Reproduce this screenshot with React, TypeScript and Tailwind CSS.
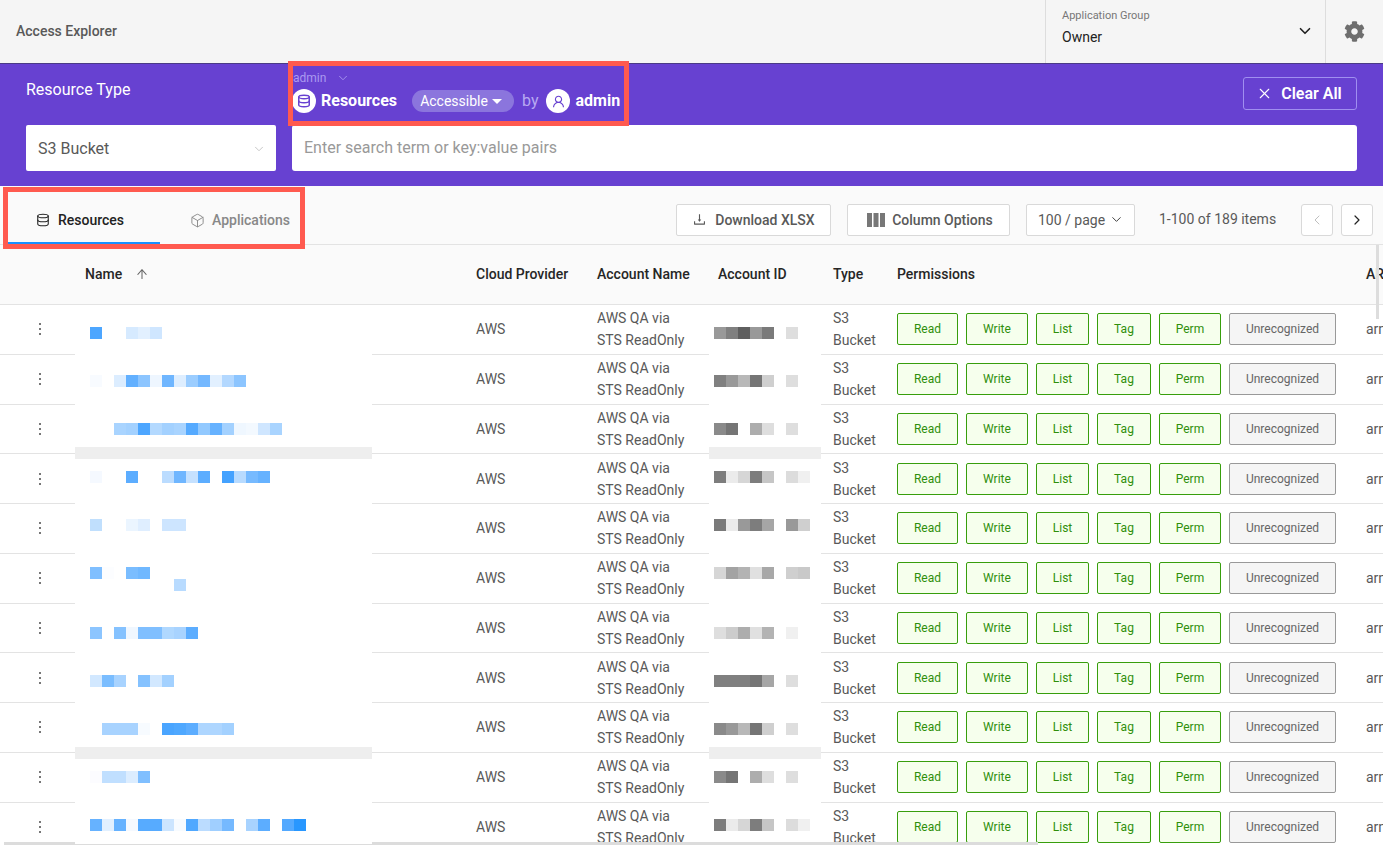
import { Box, ChevronDown, ChevronLeft, ChevronRight, Database, X } from 'lucide-react';
import { AiOutlineArrowUp, AiOutlineDownload, AiOutlineUser } from 'react-icons/ai';
import { FaCog } from 'react-icons/fa';

const nameLines: Record<number, string[]> = {
  2: ['#4da6ff', '', '', '#d6eaff', '#e2f0ff', '#cfe6ff'],
  6: ['#f8fbff', '', '#dcedff', '#62b0ff', '#8cc5ff', '#eef6ff', '#6fb6ff', '#deeeff', '#9bcdff', '#74b8ff', '#e2f0ff', '#b3d8ff', '#8cc5ff'],
  10: ['', '', '#a9d4ff', '#a3d1ff', '#4da6ff', '#b3d9ff', '#a3d1ff', '#a9d4ff', '#55aaff', '#92c9ff', '#66b2ff', '#a3d1ff', '#eff7ff', '#f3f9ff', '#cfe6ff', '#a9d4ff'],
  14: ['#f5f9ff', '', '', '#5cadff', '', '', '#bbdcff', '#6fb6ff', '#c5e1ff', '#5cadff', '', '#44a2ff', '#b8dbff', '#76baff', '#66b2ff'],
  18: ['#c0dffd', '', '', '#ebf5ff', '#dfeeff', '', '#cde5ff', '#cde5ff'],
  22: ['#80bfff', '#fcfdff', '', '#7abdff', '#70b8ff'],
  23: ['', '', '', '', '', '', '', '#b8dbff'],
  27: ['#8cc5ff', '', '#85c2ff', '#f0f7ff', '#80bfff', '#80bfff', '#b0d8ff', '#a8d3ff', '#5cadff'],
  31: ['#d2e8ff', '#7abdff', '#a8d3ff', '', '#85c2ff', '#d2e8ff', '#a3d1ff'],
  35: ['', '#a8d3ff', '#a8d3ff', '#a8d3ff', '#f7fbff', '', '#4aa5ff', '#4fa8ff', '#5cadff', '#aed6ff', '#aed6ff', '#a3d1ff'],
  39: ['#fcfcff', '#c0dfff', '#c0dfff', '#dcedff', '#80bfff'],
  43: ['#66b2ff', '#e2f0ff', '#66b2ff', '#f5f9ff', '#57abff', '#57abff', '#cce5ff', '#f7fbff', '#50a8ff', '#bbdcff', '#a0cfff', '#75b9ff', '', '#a8d3ff', '#5cadff', '', '#53a9ff', '#2897ff'],
};

const idLines: Record<number, string[]> = {
  2: ['#999999', '#808080', '#5f5f5f', '#999999', '#7a7a7a', '', '#dedede'],
  6: ['#808080', '#999999', '#b8b8b8', '#757575', '#cfcfcf', '', '#dedede'],
  10: ['#8a8a8a', '#757575', '', '#adadad', '#dedede', '', '#dedede'],
  14: ['#7d7d7d', '#ebebeb', '#d6d6d6', '#7d7d7d', '#c6c6c6', '', '#dcdcdc', '#f0f0f0'],
  18: ['#7a7a7a', '#ebebeb', '#999999', '#7d7d7d', '#a6a6a6', '', '#999999', '#cfcfcf'],
  22: ['#d6d6d6', '#a3a3a3', '#b3b3b3', '#e0e0e0', '#a8a8a8', '', '#cfcfcf', '#c9c9c9'],
  27: ['#dedede', '#cccccc', '#adadad', '#e0e0e0', '#b3b3b3', '', '#f0f0f0'],
  31: ['#808080', '#808080', '#808080', '#757575', '#a6a6a6', '', '#dedede'],
  35: ['#8a8a8a', '#999999', '#b8b8b8', '#757575', '#cfcfcf', '', '#dedede'],
  39: ['#8a8a8a', '#757575', '', '#adadad', '#dedede', '', '#dedede'],
  43: ['#7d7d7d', '#ebebeb', '#d6d6d6', '#7d7d7d', '#c6c6c6', '', '#dcdcdc', '#f0f0f0'],
};

const lineIndexes = Array.from({ length: 45 }, (_, i) => i);
const permissions = ['Read', 'Write', 'List', 'Tag', 'Perm'];
const permissionWidths = ['w-[61px]', 'w-[62px]', 'w-[53px]', 'w-[54px]', 'w-[62px]'];
const rows = Array.from({ length: 11 }, (_, i) => i);
const rowGrid = 'grid grid-cols-[75px_391px_121px_121px_115px_64px_469px_200px]';

// redacted cells in the screenshot: a white panel with a 12px mosaic
const Mosaic = ({ lines, className }: { lines: Record<number, string[]>; className: string }) => (
  <div className={`absolute top-[60px] h-[539px] overflow-hidden bg-white ${className}`}>
    <div className="-mt-[2px] flex flex-col">
      {lineIndexes.map((i) => (
        <div key={i} className={`flex h-3 shrink-0 ${i === 12 || i === 37 ? '-mx-5 bg-[#eeeeee]' : ''}`}>
          {(lines[i] || []).map((c, j) => (
            <div key={j} className="h-3 w-3 shrink-0" style={{ backgroundColor: c || 'transparent' }} />
          ))}
        </div>
      ))}
    </div>
  </div>
);

const Row = () => (
  <div className={`${rowGrid} h-[49.75px] items-center border-b border-[#e3e3e3] text-sm leading-[22px] text-[#595959]`}>
    <div className="flex flex-col items-center gap-[3px] pl-[5px]">
      <span className="h-[2px] w-[2px] bg-[#777777]" />
      <span className="h-[2px] w-[2px] bg-[#777777]" />
      <span className="h-[2px] w-[2px] bg-[#777777]" />
    </div>
    <div />
    <div className="pl-[10px]">AWS</div>
    <div className="pl-[10px]">
      AWS QA via
      <br />
      STS ReadOnly
    </div>
    <div />
    <div className="pl-[10px]">
      S3
      <br />
      Bucket
    </div>
    <div className="flex gap-2 pl-[10px]">
      {permissions.map((p, i) => (
        <span
          key={p}
          className={`flex h-8 items-center justify-center rounded-[2px] border border-[#389e0d] bg-[#f6ffed] text-xs text-[#2f8f0b] ${permissionWidths[i]}`}
        >
          {p}
        </span>
      ))}
      <span className="flex h-8 w-[107px] items-center justify-center rounded-[2px] border border-[#999999] bg-[#f5f5f5] text-xs text-[#666666]">
        Unrecognized
      </span>
    </div>
    <div className="whitespace-nowrap pl-[10px]">arn:aws:s3:::</div>
  </div>
);

export default function App() {
  return (
    <div className="relative h-[849px] w-[1383px] overflow-hidden bg-white font-['Roboto',sans-serif]">
      <div className="flex h-16 items-stretch justify-between border-b border-[#4a3a86] bg-[#f5f5f5]">
        <div className="flex items-center pb-[2px] pl-4 text-sm font-medium text-[#595959]">Access Explorer</div>
        <div className="flex">
          <div className="flex w-[280px] items-start justify-between border-l border-[#dddddd] pl-4 pr-[11px] pt-2">
            <div>
              <div className="text-[11px] leading-[15px] text-[#777777]">Application Group</div>
              <div className="mt-1 text-sm leading-5 text-[#222222]">Owner</div>
            </div>
            <ChevronDown className="mt-[14px] h-[18px] w-[18px] text-[#222222]" strokeWidth={2.2} />
          </div>
          <div className="flex w-[58px] items-start justify-center border-l border-[#dddddd] pt-[21px]">
            <FaCog className="h-[21px] w-[21px] text-[#6e6e6e]" />
          </div>
        </div>
      </div>

      <div className="h-[122px] bg-[#6741d1] px-[26px]">
        <div className="flex h-[61px] items-start justify-between">
          <div className="flex">
            <div className="mt-[15px] w-[266px] text-base leading-[22px] text-white">Resource Type</div>
            <div className="mt-[6px]">
              <div className="ml-[1px] flex h-4 items-center gap-[10px] text-xs text-[#ab9af0]">
                admin
                <ChevronDown className="h-[14px] w-[14px]" strokeWidth={1.5} />
              </div>
              <div className="mt-[3px] flex items-center">
                <span className="flex h-6 w-6 items-center justify-center rounded-full bg-white">
                  <Database className="h-[14px] w-[14px] text-[#6741d1]" strokeWidth={2.5} />
                </span>
                <span className="ml-[5px] text-base font-bold text-white">Resources</span>
                <span className="ml-[15px] flex h-[22px] w-[102px] items-center justify-center gap-1 rounded-full bg-[#8b75dd] pr-1 text-sm text-white">
                  Accessible
                  <span className="mt-[1px] h-0 w-0 border-x-[5px] border-t-[5px] border-x-transparent border-t-white" />
                </span>
                <span className="ml-2 text-base text-[#b8a9f2]">by</span>
                <span className="ml-2 flex h-6 w-6 items-center justify-center rounded-full bg-white">
                  <AiOutlineUser className="h-[15px] w-[15px] text-[#6741d1]" />
                </span>
                <span className="ml-[5px] text-base font-bold text-white">admin</span>
              </div>
            </div>
          </div>
          <button className="mt-[13px] flex h-[33px] w-[114px] items-center justify-center gap-2 rounded-[3px] border border-[#a08ff0] pr-[2px] text-base font-semibold text-white">
            <X className="h-[17px] w-[17px]" strokeWidth={1.5} />
            Clear All
          </button>
        </div>
        <div className="flex h-[46px] gap-4">
          <div className="flex w-[250px] items-center justify-between rounded-[2px] bg-white pl-3 pr-[10px] pt-[2px] text-base text-[#595959]">
            S3 Bucket
            <ChevronDown className="h-[14px] w-[14px] text-[#bfbfbf]" strokeWidth={1.5} />
          </div>
          <input
            readOnly
            placeholder="Enter search term or key:value pairs"
            className="flex-1 rounded-[3px] bg-white px-3 text-base text-[#595959] outline-none placeholder:text-[#999999]"
          />
        </div>
      </div>

      <div className="flex h-[59px] items-stretch justify-between border-b border-[#e3e3e3] bg-[#fafafa] pl-2 pr-[10px]">
        <div className="flex text-sm font-medium">
          <div className="flex w-[152px] items-center gap-2 border-b-2 border-[#1890ff] pl-[28px] pt-[12px] text-[#222222]">
            <Database className="h-[14px] w-[14px]" strokeWidth={1.8} />
            Resources
          </div>
          <div className="ml-[30px] flex items-center gap-[7px] pt-[10px] text-[#888888]">
            <Box className="h-[15px] w-[15px]" strokeWidth={1.5} />
            Applications
          </div>
        </div>
        <div className="flex items-center pt-[9px] text-sm text-[#595959]">
          <button className="flex h-8 w-[155px] items-center justify-center gap-2 rounded-[2px] border border-[#d9d9d9] bg-white font-medium">
            <AiOutlineDownload className="h-[15px] w-[15px]" />
            Download XLSX
          </button>
          <button className="ml-4 flex h-8 w-[163px] items-center justify-center gap-[7px] rounded-[2px] border border-[#d9d9d9] bg-white pl-[3px] font-medium">
            <svg viewBox="0 0 18 14" className="h-[14px] w-[18px] fill-[#777777]">
              <rect x="0" y="0" width="5" height="14" />
              <rect x="6.5" y="0" width="5" height="14" />
              <rect x="13" y="0" width="5" height="14" />
            </svg>
            Column Options
          </button>
          <div className="ml-4 flex h-8 w-[109px] items-center justify-between rounded-[2px] border border-[#d9d9d9] bg-white pl-[11px] pr-[10px]">
            100 / page
            <ChevronDown className="h-[15px] w-[15px] text-[#333333]" strokeWidth={1.5} />
          </div>
          <span className="mb-[2px] ml-6 w-[117px] whitespace-nowrap">1-100 of 189 items</span>
          <button className="ml-[25px] flex h-8 w-8 items-center justify-center rounded-[3px] border border-[#d9d9d9] bg-white">
            <ChevronLeft className="h-4 w-4 text-[#bfbfbf]" strokeWidth={1.5} />
          </button>
          <button className="ml-2 flex h-8 w-8 items-center justify-center rounded-[3px] border border-[#d9d9d9] bg-white">
            <ChevronRight className="h-4 w-4 text-[#222222]" strokeWidth={1.8} />
          </button>
        </div>
      </div>

      <div className="relative h-[600px] overflow-hidden">
        <div className={`${rowGrid} h-[60px] items-center border-b border-[#e3e3e3] bg-[#fafafa] pb-[2px] text-sm font-medium text-[#262626]`}>
          <div />
          <div className="flex items-center gap-[13px] pl-[10px]">
            Name
            <AiOutlineArrowUp className="h-[14px] w-[14px] text-[#666666]" />
          </div>
          <div className="pl-[10px]">Cloud Provider</div>
          <div className="pl-[10px]">Account Name</div>
          <div className="pl-[10px]">Account ID</div>
          <div className="pl-[10px]">Type</div>
          <div className="pl-[10px]">Permissions</div>
          <div className="pl-[10px]">ARN</div>
        </div>
        {rows.map((r) => (
          <Row key={r} />
        ))}
        <Mosaic lines={idLines} className="left-[709px] w-[112px] pl-[5px]" />
        <div className="absolute left-1 top-[597px] h-[3px] w-[1034px] bg-[#dcdcdc]" />
        <Mosaic lines={nameLines} className="left-[75px] w-[297px] pl-[15px]" />
        <div className="absolute right-[4px] top-0 h-[74px] w-[3px] bg-[#dddddd]" />
      </div>

      <div className="absolute left-[288px] top-[61px] h-[65px] w-[341px] border-[5px] border-[#ff5a4f]" />
      <div className="absolute left-[3px] top-[187px] h-[62px] w-[302px] border-[5px] border-[#ff5a4f]" />
    </div>
  );
}
